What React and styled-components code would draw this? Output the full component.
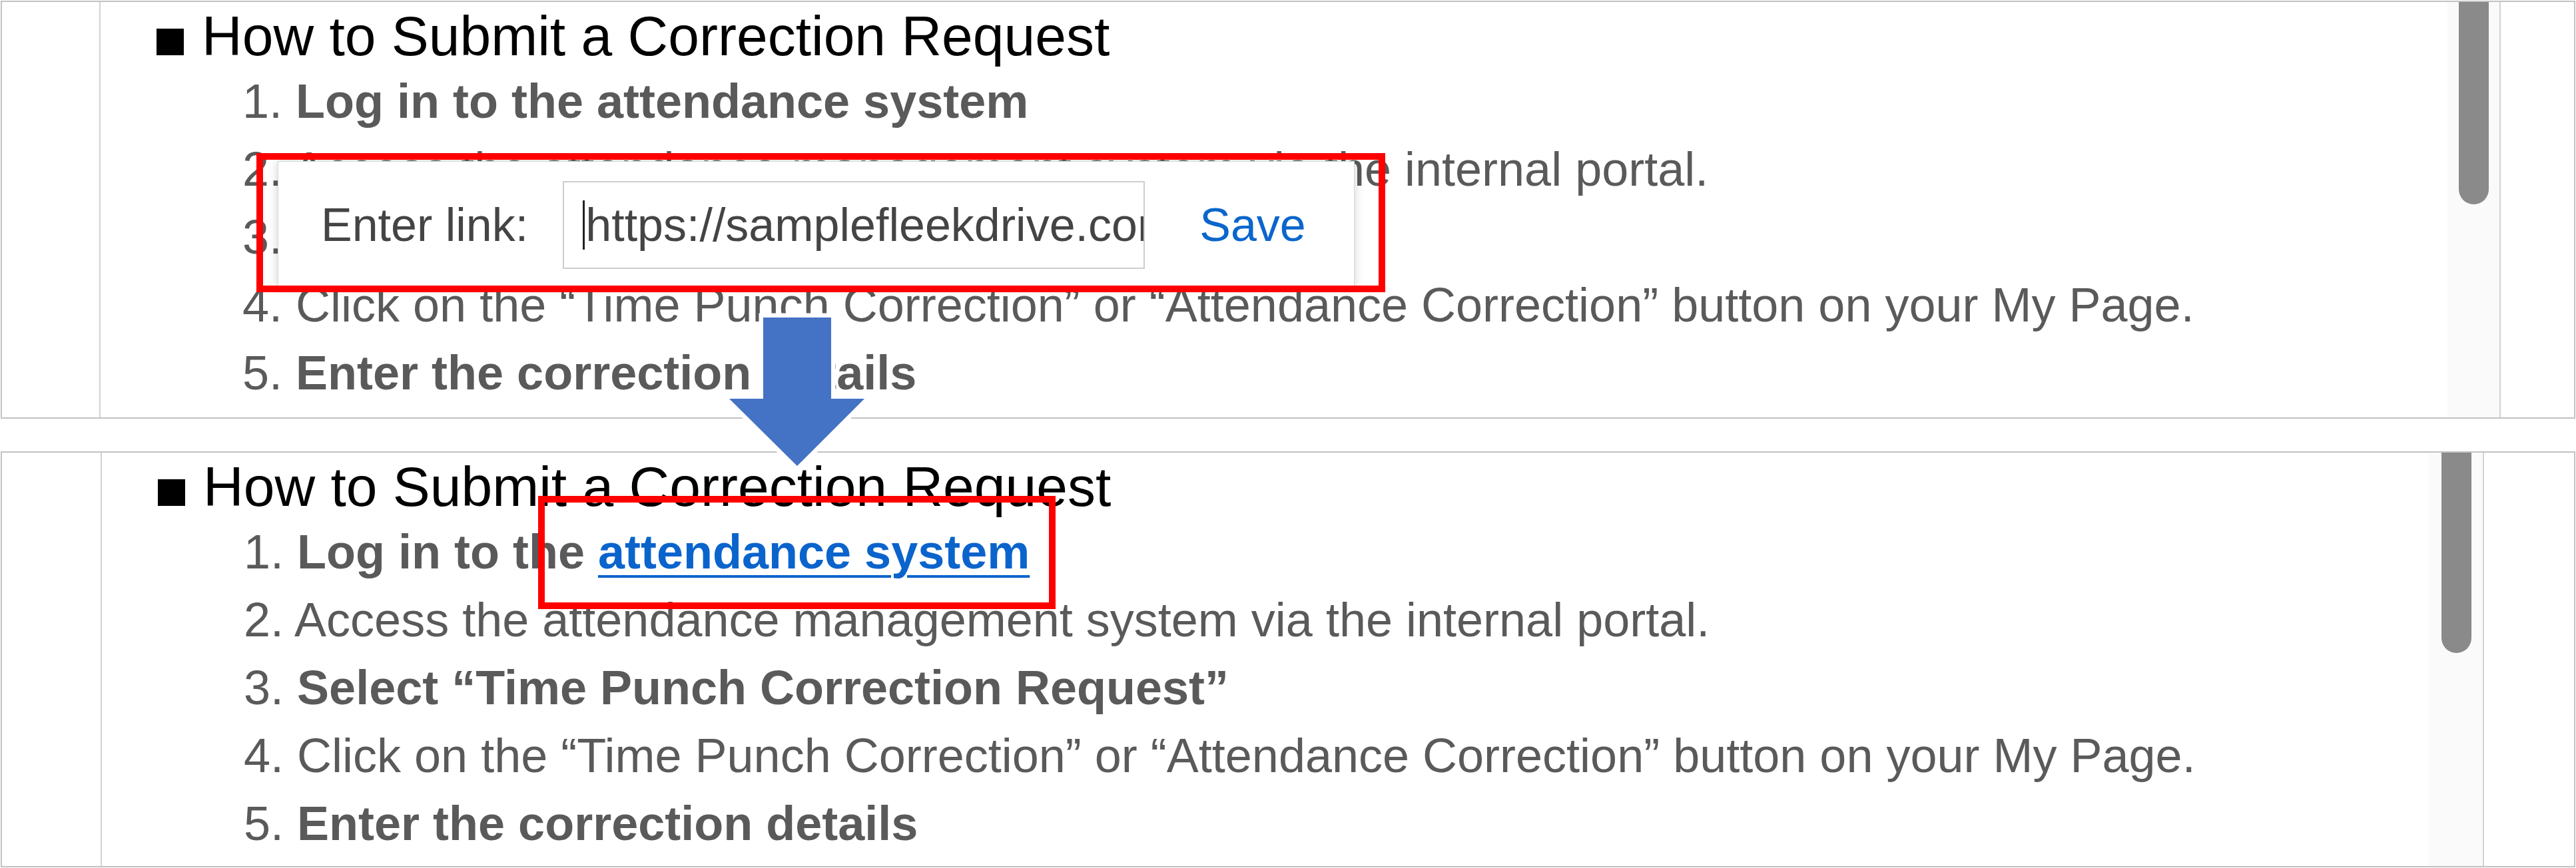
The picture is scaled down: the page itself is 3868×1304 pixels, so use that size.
import React from "react";
import styled, { createGlobalStyle } from "styled-components";

const GlobalStyle = createGlobalStyle`
  body {
    margin: 0;
    background: #fff;
    font-family: "Liberation Sans", Arial, sans-serif;
  }
`;

const Stage = styled.div`
  position: relative;
  width: 3866px;
  padding: 1px 1px 0;
  display: flex;
  flex-direction: column;
  gap: 49px;
`;

const Panel = styled.div`
  position: relative;
  display: flex;
  height: ${(p) => p.$h}px;
  box-sizing: border-box;
  border: 2px solid #c2c2c2;
  overflow: hidden;
  background: #fff;
`;

const Gutter = styled.div`
  flex: none;
  width: ${(p) => p.$w}px;
  border-right: ${(p) => (p.$line ? "2px solid #d2d2d2" : "none")};
`;

const Content = styled.div`
  flex: 1;
  min-width: 0;
  padding: 4px 0 0 84px;
`;

const Title = styled.h2`
  margin: 0;
  display: flex;
  align-items: baseline;
  font-size: 84px;
  line-height: 94px;
  font-weight: 400;
  color: #000;
  white-space: nowrap;
`;

const Bullet = styled.span`
  display: inline-block;
  width: 41px;
  height: 40px;
  margin-right: 27px;
  background: #000;
`;

const Steps = styled.ol`
  list-style: none;
  margin: 0;
  padding: 0 0 0 129px;
  font-size: 72px;
  line-height: 102px;
  color: #5a5a5a;
  white-space: nowrap;
`;

const Step = styled.li``;

const Strong = styled.span`
  font-weight: 700;
`;

const Link = styled.a`
  color: #0b64cc;
  font-weight: 700;
  text-decoration: underline;
  text-decoration-thickness: 4px;
  text-underline-offset: 10px;
`;

const Track = styled.div`
  flex: none;
  width: ${(p) => p.$w}px;
  background: #fafafa;
  border-right: 2px solid #d2d2d2;
  padding-left: ${(p) => p.$offset}px;
  box-sizing: content-box;
`;

const Thumb = styled.div`
  width: 45px;
  height: ${(p) => p.$h}px;
  background: #8a8a8a;
  border-radius: 0 0 23px 23px;
`;

const Popup = styled.div`
  position: absolute;
  left: 414px;
  top: 239px;
  width: 1617px;
  height: 192px;
  box-sizing: border-box;
  display: flex;
  align-items: center;
  padding: 0 0 0 64px;
  background: #fff;
  border: 1px solid #d8d8d8;
  box-shadow: 0 0 14px rgba(0, 0, 0, 0.18);
  font-size: 70px;
  color: #444;
  white-space: nowrap;
`;

const Label = styled.span`
  margin-right: 52px;
`;

const Field = styled.div`
  flex: none;
  width: 874px;
  height: 132px;
  box-sizing: border-box;
  display: flex;
  align-items: center;
  padding-left: 28px;
  border: 2px solid #cdcdcd;
  overflow: hidden;
  color: #444;
`;

const Caret = styled.span`
  flex: none;
  width: 3px;
  height: 74px;
  margin-right: 1px;
  background: #222;
`;

const SaveButton = styled.button`
  margin-left: 82px;
  padding: 0;
  border: none;
  background: none;
  font: inherit;
  color: #0b66cc;
  cursor: pointer;
`;

const Highlight = styled.div`
  position: absolute;
  left: ${(p) => p.$x}px;
  top: ${(p) => p.$y}px;
  width: ${(p) => p.$w}px;
  height: ${(p) => p.$h}px;
  box-sizing: border-box;
  border: 10px solid #ff0000;
  pointer-events: none;
`;

const Arrow = styled.svg`
  position: absolute;
  left: 1085px;
  top: 467px;
  overflow: visible;
`;

const StepList = ({ link }) => (
  <Steps>
    <Step>
      1.{" "}
      <Strong>
        Log in to the{" "}
        {link ? <Link href="#">attendance system</Link> : "attendance system"}
      </Strong>
    </Step>
    <Step>2. Access the attendance management system via the internal portal.</Step>
    <Step>
      3. <Strong>Select “Time Punch Correction Request”</Strong>
    </Step>
    <Step>
      4. Click on the “Time Punch Correction” or “Attendance Correction” button on your My Page.
    </Step>
    <Step>
      5. <Strong>Enter the correction details</Strong>
    </Step>
  </Steps>
);

const Heading = () => (
  <Title>
    <Bullet />
    How to Submit a Correction Request
  </Title>
);

export default function App() {
  return (
    <>
      <GlobalStyle />
      <Stage>
        <Panel $h={628}>
          <Gutter $w={146} $line />
          <Content>
            <Heading />
            <StepList />
          </Content>
          <Track $w={61} $offset={17}>
            <Thumb $h={304} />
          </Track>
          <Gutter $w={110} />

          <Popup>
            <Label>Enter link:</Label>
            <Field>
              <Caret />
              https://samplefleekdrive.com/share/attendance
            </Field>
            <SaveButton>Save</SaveButton>
          </Popup>
          <Highlight $x={382} $y={227} $w={1695} $h={209} />
        </Panel>

        <Panel $h={625}>
          <Gutter $w={148} $line />
          <Content>
            <Heading />
            <StepList link />
          </Content>
          <Track $w={62} $offset={19}>
            <Thumb $h={301} />
          </Track>
          <Gutter $w={135} />
          <Highlight $x={805} $y={65} $w={777} $h={170} />
        </Panel>

        <Arrow width="224" height="245" viewBox="0 0 224 245">
          <polygon
            points="61,10 163,10 163,132 213,132 112,233 10,132 61,132"
            fill="#4472c4"
            stroke="#fff"
            strokeWidth="13"
            paintOrder="stroke"
          />
        </Arrow>
      </Stage>
    </>
  );
}
